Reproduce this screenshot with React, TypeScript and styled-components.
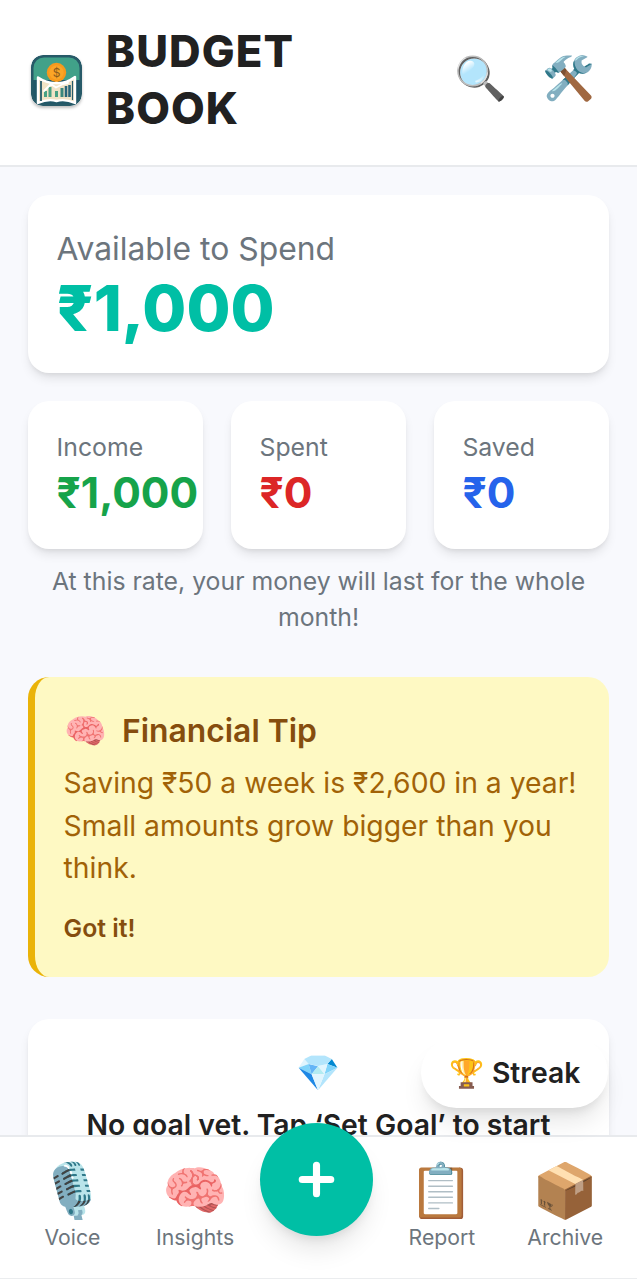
import React from "react";
import styled, { createGlobalStyle } from "styled-components";

const GlobalStyle = createGlobalStyle`
  *, *::before, *::after { box-sizing: border-box; }
  body { margin: 0; background: #f8f9fd; font-family: Inter, "Noto Color Emoji", sans-serif; color: #212121; }
  h1, h2, p { margin: 0; }
  button { font: inherit; border: 0; background: none; padding: 0; cursor: pointer; color: inherit; }
`;

const Screen = styled.div`
  position: relative;
  display: flex;
  flex-direction: column;
  width: 637px;
  height: 1280px;
  overflow: hidden;
`;

const Header = styled.header`
  display: flex;
  align-items: center;
  flex: none;
  height: 167px;
  padding: 0 42px 5px 31px;
  background: #fff;
  border-bottom: 2px solid #e8eaed;
`;

const Logo = styled.svg`
  width: 51px;
  height: 51px;
  flex: none;
  border-radius: 12px;
  box-shadow: 0 2px 3px rgba(0, 0, 0, 0.25);
`;

const Title = styled.h1`
  width: 240px;
  margin-left: 24px;
  padding-top: 1.6px;
  font-size: 43.7px;
  line-height: 56.6px;
  font-weight: 800;
  letter-spacing: 1.1px;
`;

const Tools = styled.div`
  display: flex;
  gap: 35px;
  margin: -5px 0 0 auto;
  font-size: 42.5px;
`;

const Main = styled.main`
  flex: 1;
  min-height: 0;
  overflow: hidden;
  padding: 28.3px 28.3px 0;
`;

const Card = styled.section`
  padding: 28.7px 28.3px 28.3px;
  border-radius: 21.2px;
  background: #fff;
  box-shadow: 0 7px 11px -2px rgba(0, 0, 0, 0.1), 0 3px 5px -2px rgba(0, 0, 0, 0.08);
`;

const Label = styled.p<{ $large?: boolean }>`
  font-size: ${(p) => (p.$large ? "31.85px" : "24.8px")};
  line-height: ${(p) => (p.$large ? "49.5px" : "35.4px")};
  color: #6c757d;
`;

const Amount = styled.p<{ $large?: boolean; $color: string }>`
  font-size: ${(p) => (p.$large ? "63.7px" : "42.5px")};
  line-height: ${(p) => (p.$large ? "70.8px" : "56px")};
  font-weight: ${(p) => (p.$large ? 800 : 700)};
  color: ${(p) => p.$color};
`;

const Stats = styled.div`
  display: grid;
  grid-template-columns: repeat(3, minmax(0, 1fr));
  gap: 28.3px;
  margin-top: 28.4px;
`;

const Forecast = styled.p`
  margin: 14.6px 0 42.2px;
  font-size: 24.8px;
  line-height: 35.6px;
  text-align: center;
  color: #6c757d;
`;

const Tip = styled.section`
  height: 299.3px;
  padding: 28.3px 25px 28.3px 28.3px;
  border-left: 7.1px solid #eab308;
  border-radius: 21.2px;
  background: #fef9c3;
  color: #a16207;
`;

const TipTitle = styled.h2`
  display: flex;
  align-items: center;
  gap: 14.5px;
  height: 49.5px;
  font-size: 31.85px;
  line-height: 49.5px;
  font-weight: 600;
  color: #854d0e;
`;

const TipEmoji = styled.span`
  margin-left: 1px;
  font-size: 34.4px;
`;

const TipText = styled.p`
  margin-top: 7.2px;
  font-size: 28.3px;
  line-height: 42.5px;
`;

const TipButton = styled.button`
  display: block;
  margin-top: 21.6px;
  font-size: 24.8px;
  line-height: 35.4px;
  font-weight: 600;
  color: #854d0e;
`;

const GoalCard = styled(Card)`
  display: flex;
  flex-direction: column;
  align-items: center;
  height: 220px;
  margin-top: 42.5px;
  font-size: 28.3px;
  line-height: 42.5px;
  font-weight: 600;
  white-space: nowrap;
`;

const GoalEmoji = styled.span`
  height: 49.5px;
  margin-bottom: 6.9px;
  font-size: 35.4px;
  line-height: 49.5px;
`;

const Streak = styled.button`
  position: absolute;
  right: 29px;
  top: 1037px;
  display: flex;
  align-items: center;
  justify-content: center;
  gap: 7px;
  width: 187px;
  height: 71px;
  padding-left: 1px;
  border-radius: 36px;
  background: #fff;
  font-size: 28.3px;
  font-weight: 600;
  box-shadow: 0 18px 26px -5px rgba(0, 0, 0, 0.1), 0 7px 11px -5px rgba(0, 0, 0, 0.1);
`;

const Nav = styled.nav`
  display: grid;
  grid-template-columns: repeat(5, 1fr);
  align-items: start;
  flex: none;
  height: 144px;
  padding: 0 10px;
  background: #fff;
  border-top: 2px solid #e8eaed;
  border-bottom: 1px solid #ebedef;
`;

const BottomInset = styled.div`
  flex: none;
  height: 1px;
  background: #fff;
`;

const NavItem = styled.button`
  display: flex;
  flex-direction: column;
  align-items: center;
  padding-top: 20px;
  font-size: 21.2px;
  line-height: 28.3px;
  color: #6c757d;

  &:first-child {
    padding-left: 1.5px;
  }
`;

const NavEmoji = styled.span`
  height: 66px;
  font-size: 53.1px;
  line-height: 66px;
`;

const AddButton = styled.button`
  position: relative;
  display: grid;
  place-items: center;
  justify-self: center;
  width: 113px;
  height: 113px;
  margin: -14px 4px 0 0;
  border-radius: 50%;
  background: #00bfa5;
  box-shadow: 0 18px 26px -5px rgba(0, 0, 0, 0.1), 0 7px 11px -5px rgba(0, 0, 0, 0.1);
`;

const stats = [
  { label: "Income", value: "₹1,000", color: "#16a34a" },
  { label: "Spent", value: "₹0", color: "#dc2626" },
  { label: "Saved", value: "₹0", color: "#2563eb" },
];

function BookLogo() {
  return (
    <Logo viewBox="0 0 51 51">
      <rect width="51" height="51" rx="12" fill="#275a68" />
      <path d="M2.5 25V13A10.5 10.5 0 0 1 13 2.5h25A10.5 10.5 0 0 1 48.5 13v12z" fill="#41a189" />
      <path d="M2.5 25h46v13A10.5 10.5 0 0 1 38 48.5H13A10.5 10.5 0 0 1 2.5 38z" fill="#205768" />
      <circle cx="25.5" cy="17.5" r="9.7" fill="#f7991c" />
      <circle cx="25.5" cy="17.5" r="7.2" fill="#fba526" />
      <text x="25.5" y="21.8" fontSize="12" fontWeight="400" fill="#8a5c1c" textAnchor="middle">$</text>
      <path d="M7 22.5Q17 29 25.5 28 34 29 44 22v26Q34 43.5 25.5 46 17 43.5 7 48z" fill="#f1e3c6" stroke="#fff" strokeWidth="2.4" strokeLinejoin="round" />
      <path d="M10 26v20" stroke="#25596a" strokeWidth="1.8" />
      <path d="M41.5 26v19" stroke="#25596a" strokeWidth="1.2" />
      <path d="M14.5 36v6M19 32v10M25.5 36v6" stroke="#48a184" strokeWidth="3" />
      <path d="M31 33v9" stroke="#39877d" strokeWidth="3" />
      <path d="M35 31v11M38.5 30v12" stroke="#28657a" strokeWidth="2.6" />
      <path d="M13 36l7-7 5 3.5 7-3.5 5-1" fill="none" stroke="#fff" strokeWidth="1.8" strokeLinecap="round" strokeLinejoin="round" />
    </Logo>
  );
}

export default function App() {
  return (
    <>
      <GlobalStyle />
      <Screen>
        <Header>
          <BookLogo />
          <Title>BUDGET BOOK</Title>
          <Tools>
            <span>🔍</span>
            <span>🛠️</span>
          </Tools>
        </Header>
        <Main>
          <Card>
            <Label $large>Available to Spend</Label>
            <Amount $large $color="#00bfa5">₹1,000</Amount>
          </Card>
          <Stats>
            {stats.map((s) => (
              <Card key={s.label}>
                <Label>{s.label}</Label>
                <Amount $color={s.color}>{s.value}</Amount>
              </Card>
            ))}
          </Stats>
          <Forecast>At this rate, your money will last for the whole month!</Forecast>
          <Tip>
            <TipTitle><TipEmoji>🧠</TipEmoji>Financial Tip</TipTitle>
            <TipText>Saving ₹50 a week is ₹2,600 in a year! Small amounts grow bigger than you think.</TipText>
            <TipButton>Got it!</TipButton>
          </Tip>
          <GoalCard>
            <GoalEmoji>💎</GoalEmoji>
            <p>No goal yet. Tap ‘Set Goal’ to start</p>
          </GoalCard>
        </Main>
        <Nav>
          <NavItem><NavEmoji>🎙️</NavEmoji>Voice</NavItem>
          <NavItem><NavEmoji>🧠</NavEmoji>Insights</NavItem>
          <AddButton aria-label="Add">
            <svg width="57" height="57" viewBox="0 0 24 24" fill="none" stroke="#fff" strokeWidth="3" strokeLinecap="round">
              <path d="M12 6v12M6 12h12" />
            </svg>
          </AddButton>
          <NavItem><NavEmoji>📋</NavEmoji>Report</NavItem>
          <NavItem><NavEmoji>📦</NavEmoji>Archive</NavItem>
        </Nav>
        <BottomInset />
        <Streak><span>🏆</span>Streak</Streak>
      </Screen>
    </>
  );
}
